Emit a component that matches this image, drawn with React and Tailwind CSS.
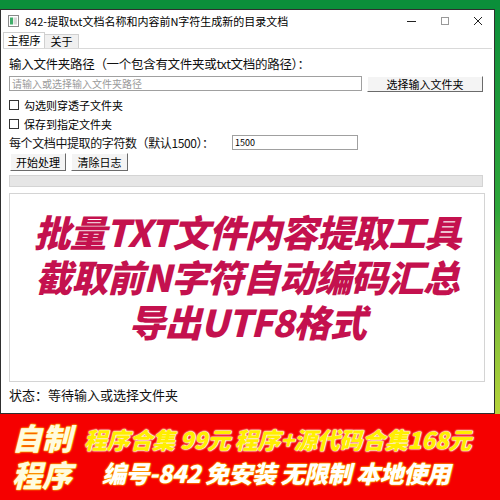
const cjk = "font-['Microsoft_YaHei','Noto_Sans_CJK_SC',sans-serif]";
const song = "font-['SimSun','Noto_Sans_CJK_SC',sans-serif]";

const WinButton = ({ children, className = "" }) => (
  <button
    className={`bg-[#f4f4f4] border-t border-l border-t-white border-l-white border-r border-b border-r-[#6b6b6b] border-b-[#6b6b6b] text-[11px] text-black leading-none ${className}`}
  >
    {children}
  </button>
);

const Check = ({ label }) => (
  <div className="flex items-center gap-[5px] h-[12px]">
    <span className="w-[10px] h-[10px] border border-[#333] bg-white" />
    <span className="text-[11px] leading-none text-black">{label}</span>
  </div>
);

export default function App() {
  return (
    <div className={`w-[500px] h-[500px] flex flex-col bg-[#0b8f3a] overflow-hidden ${cjk}`}>
      <div className="h-[9px] shrink-0" />
      <div className="flex h-[405px] shrink-0">
        {/* WINDOW */}
        <div className="w-[495px] bg-white border border-[#2f2f2f] flex flex-col">
          {/* title bar */}
          <div className="h-[22px] flex items-center pl-[7px] shrink-0">
            <svg width="11" height="12" viewBox="0 0 11 12">
              <rect x="0.5" y="0.5" width="10" height="11" fill="#fff" stroke="#8a8a8a" />
              <rect x="2" y="2.5" width="3" height="7" fill="#3fae6a" />
              <rect x="5.5" y="2.5" width="3.5" height="7" fill="#d8d8d8" />
            </svg>
            <span className="ml-[6px] text-[11px] text-black leading-none">
              842-提取txt文档名称和内容前N字符生成新的目录文档
            </span>
            <div className="ml-auto flex items-center h-full">
              <div className="w-[33px] flex justify-center">
                <span className="w-[9px] h-[1px] bg-[#222]" />
              </div>
              <div className="w-[33px] flex justify-center">
                <span className="w-[8px] h-[8px] border border-[#999]" />
              </div>
              <div className="w-[33px] flex justify-center">
                <svg width="10" height="10" viewBox="0 0 10 10">
                  <path d="M1 1L9 9M9 1L1 9" stroke="#222" strokeWidth="1" />
                </svg>
              </div>
            </div>
          </div>
          {/* tabs */}
          <div className="flex h-[16px] items-end pl-[2px] shrink-0">
            <div className="h-[16px] w-[42px] bg-white border border-b-0 border-[#d0d0d0] flex items-center justify-center text-[11px] leading-none">
              主程序
            </div>
            <div className="h-[14px] w-[34px] bg-[#f0f0f0] border border-b-0 border-l-0 border-[#d0d0d0] flex items-center justify-center text-[11px] leading-none">
              关于
            </div>
          </div>
          {/* panel */}
          <div className="flex-1 border-t border-[#d9d9d9] mx-[2px] flex flex-col px-[6px]">
            <div className={`mt-[6px] text-[12.5px] tracking-[-0.3px] leading-[18px] text-[#111] whitespace-nowrap ${song}`}>
              输入文件夹路径（一个包含有文件夹或txt文档的路径）：
            </div>
            <div className="flex items-start mt-[3px]">
              <div className="w-[353px] h-[15px] border border-[#a0a0a0] flex items-center px-[2px] text-[10px] text-[#9a9a9a] leading-none">
                请输入或选择输入文件夹路径
              </div>
              <WinButton className="ml-[5px] w-[116px] h-[16px]">选择输入文件夹</WinButton>
            </div>
            <div className="mt-[7px]">
              <Check label="勾选则穿透子文件夹" />
            </div>
            <div className="mt-[7px]">
              <Check label="保存到指定文件夹" />
            </div>
            <div className="flex items-center mt-[4px] h-[17px]">
              <span className={`w-[223px] shrink-0 text-[12px] tracking-[-0.4px] leading-none text-[#111] whitespace-nowrap ${song}`}>
                每个文档中提取的字符数（默认1500）：
              </span>
              <div className="w-[126px] h-[15px] border border-[#a0a0a0] flex items-center px-[2px] text-[9px] leading-none text-black">
                1500
              </div>
            </div>
            <div className="flex gap-[5px] mt-[2px] pl-[1px]">
              <WinButton className="w-[56px] h-[18px]">开始处理</WinButton>
              <WinButton className="w-[57px] h-[18px]">清除日志</WinButton>
            </div>
            <div className="mt-[4px] w-[474px] h-[12px] bg-[#e6e6e6] border border-[#d4d4d4]" />
            <div className="mt-[6px] w-[476px] h-[189px] border border-[#d4d4d4] bg-white flex flex-col items-center justify-center pb-[22px]">
              <div className="text-[37px] leading-[45px] font-black italic text-[#c4114e] tracking-[-1px] text-center whitespace-nowrap">
                <div>批量TXT文件内容提取工具</div>
                <div>截取前N字符自动编码汇总</div>
                <div>导出UTF8格式</div>
              </div>
            </div>
            <div className="mt-[3px] text-[13px] leading-[20px] text-[#111]">
              状态：等待输入或选择文件夹
            </div>
          </div>
        </div>
        <div className="flex-1 bg-gradient-to-b from-[#0b8f3a] via-[#2ea63a] to-[#b5d33a]" />
      </div>
      {/* BANNER */}
      <div className="flex-1 bg-[#f50000] flex items-center pl-[12px] pb-[2px]">
        <div className="flex flex-col text-[30px] leading-[37px] font-black italic text-[#fffbe0] [text-shadow:0_0_2px_#ffc400,0_0_2px_#ffc400,0_0_1px_#ffc400]">
          <span>自制</span>
          <span>程序</span>
        </div>
        <div className="flex flex-col ml-[12px] font-black italic text-[23px] leading-[33px] whitespace-nowrap">
          <span className="text-[#ffee00] [text-shadow:0_0_2px_#fff,0_0_2px_#fff,0_0_1px_#fff] tracking-[-0.3px]">
            程序合集 99元 程序+源代码合集168元
          </span>
          <span className="pl-[18px] text-white text-[24px] [text-shadow:0_0_2px_#ffbb00,0_0_2px_#ffbb00,0_0_1px_#ffbb00] tracking-[-0.5px]">
            编号-842 免安装 无限制 本地使用
          </span>
        </div>
      </div>
    </div>
  );
}
